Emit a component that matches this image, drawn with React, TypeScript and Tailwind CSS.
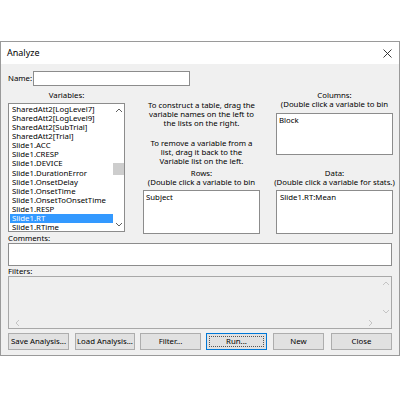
import React from 'react';

const font = { fontFamily: '"Noto Sans", "Open Sans", sans-serif' };

const variables = [
  'SharedAtt2[LogLevel7]',
  'SharedAtt2[LogLevel9]',
  'SharedAtt2[SubTrial]',
  'SharedAtt2[Trial]',
  'Slide1.ACC',
  'Slide1.CRESP',
  'Slide1.DEVICE',
  'Slide1.DurationError',
  'Slide1.OnsetDelay',
  'Slide1.OnsetTime',
  'Slide1.OnsetToOnsetTime',
  'Slide1.RESP',
  'Slide1.RT',
  'Slide1.RTime',
];

const Chevron = ({ dir, color }: { dir: 'up' | 'down' | 'left' | 'right'; color: string }) => {
  const d = {
    up: 'M1 5 L4 2 L7 5',
    down: 'M1 2 L4 5 L7 2',
    left: 'M5 1 L2 4 L5 7',
    right: 'M2 1 L5 4 L2 7',
  }[dir];
  return (
    <svg width="8" height="8" viewBox="0 0 8 8" className="block">
      <path d={d} fill="none" stroke={color} strokeWidth="1" />
    </svg>
  );
};

const Button = ({ label, width, focused }: { label: string; width: string; focused?: boolean }) => (
  <div
    className={`${width} h-[17px] flex items-center justify-center bg-[#e1e1e1] border ${
      focused ? 'border-[#0078d7]' : 'border-[#adadad]'
    } text-[7.8px] text-black`}
  >
    {focused ? (
      <div className="w-[calc(100%-4px)] h-[calc(100%-4px)] border border-dotted border-[#555] flex items-center justify-center">
        {label}
      </div>
    ) : (
      label
    )}
  </div>
);

const App: React.FC = () => {
  return (
    <div className="w-[400px] h-[400px] bg-white pt-[41px]" style={font}>
      <div className="w-[400px] h-[315px] border border-[#9a9a9a] bg-[#f0f0f0] flex flex-col text-black">
        {/* Title bar */}
        <div className="h-[22px] bg-white flex items-center justify-between pl-[6px] pr-[7px]">
          <span className="text-[9px]">Analyze</span>
          <svg width="9" height="9" viewBox="0 0 9 9">
            <path d="M0.5 0.5 L8.5 8.5 M8.5 0.5 L0.5 8.5" stroke="#222" strokeWidth="0.9" />
          </svg>
        </div>

        <div className="flex flex-col pl-[7px] pr-[6px] text-[7.8px] leading-[9px]">
          {/* Name */}
          <div className="flex items-center mt-[7px] h-[15px]">
            <span>Name:</span>
            <div className="ml-[1px] w-[157px] h-[15px] bg-white border border-[#8c8c8c]" />
          </div>

          {/* Three columns */}
          <div className="flex mt-[4px]">
            {/* Variables */}
            <div className="w-[117px] flex flex-col">
              <div className="text-center h-[9px] mt-[1px]">Variables:</div>
              <div className="mt-[3px] h-[129px] bg-white border border-[#8c8c8c] flex overflow-hidden">
                <div className="flex-1 pl-[1px] pt-[1px] overflow-hidden">
                  {variables.map((v) => (
                    <div
                      key={v}
                      className={`h-[9.08px] leading-[9.08px] pl-[2px] whitespace-nowrap ${
                        v === 'Slide1.RT' ? 'bg-[#3399ff] text-white' : ''
                      }`}
                    >
                      {v}
                    </div>
                  ))}
                </div>
                <div className="w-[11px] flex flex-col items-center pt-[3px] pb-[2px]">
                  <Chevron dir="up" color="#606060" />
                  <div className="w-[11px] h-[12px] bg-[#cdcdcd] mt-[48px]" />
                  <div className="mt-auto">
                    <Chevron dir="down" color="#606060" />
                  </div>
                </div>
              </div>
            </div>

            {/* Middle */}
            <div className="w-[117px] ml-[18px] flex flex-col text-center">
              <div className="mt-[11px] px-[1px]">
                To construct a table, drag the
                <br />
                variable names on the left to
                <br />
                the lists on the right.
              </div>
              <div className="mt-[11px]">
                To remove a variable from a
                <br />
                list, drag it back to the
                <br />
                Variable list on the left.
              </div>
              <div className="mt-[3px]">Rows:</div>
              <div className="whitespace-nowrap">(Double click a variable to bin</div>
              <div className="mt-[3px] h-[44px] bg-white border border-[#8c8c8c] text-left pl-[2px] pt-[2px]">
                Subject
              </div>
            </div>

            {/* Right */}
            <div className="w-[117px] ml-[16px] flex flex-col text-center">
              <div className="mt-[1px]">Columns:</div>
              <div className="whitespace-nowrap">(Double click a variable to bin</div>
              <div className="mt-[4px] h-[42px] bg-white border border-[#8c8c8c] text-left pl-[2px] pt-[2px]">
                Block
              </div>
              <div className="mt-[14px]">Data:</div>
              <div className="whitespace-nowrap -mx-[2px]">(Double click a variable for stats.)</div>
              <div className="mt-[3px] h-[44px] bg-white border border-[#8c8c8c] text-left pl-[3px] pt-[2px]">
                Slide1.RT:Mean
              </div>
            </div>
          </div>

          {/* Comments */}
          <div className="h-[9px]">Comments:</div>
          <div className="w-[384px] h-[23px] bg-white border border-[#8c8c8c]" />

          {/* Filters */}
          <div className="mt-[1px] h-[9px]">Filters:</div>
          <div className="w-[384px] h-[53px] border border-[#a8a8a8] bg-[#efefef] flex flex-col">
            <div className="flex-1 flex">
              <div className="flex-1" />
              <div className="w-[11px] flex flex-col items-center justify-between pt-[3px] pb-[1px]">
                <Chevron dir="up" color="#c4c4c4" />
                <Chevron dir="down" color="#c4c4c4" />
              </div>
            </div>
            <div className="h-[11px] flex items-center pl-[5px] pr-[16px] justify-between">
              <Chevron dir="left" color="#c4c4c4" />
              <Chevron dir="right" color="#c4c4c4" />
            </div>
          </div>

          {/* Buttons */}
          <div className="flex mt-[4px] h-[17px] items-center">
            <Button label="Save Analysis..." width="w-[61px]" />
            <div className="ml-[6px]">
              <Button label="Load Analysis..." width="w-[60px]" />
            </div>
            <div className="ml-[5px]">
              <Button label="Filter..." width="w-[61px]" />
            </div>
            <div className="ml-[5px]">
              <Button label="Run..." width="w-[61px]" focused />
            </div>
            <div className="ml-[6px]">
              <Button label="New" width="w-[51px]" />
            </div>
            <div className="ml-[7px]">
              <Button label="Close" width="w-[61px]" />
            </div>
          </div>
        </div>
      </div>
    </div>
  );
};

export default App;
